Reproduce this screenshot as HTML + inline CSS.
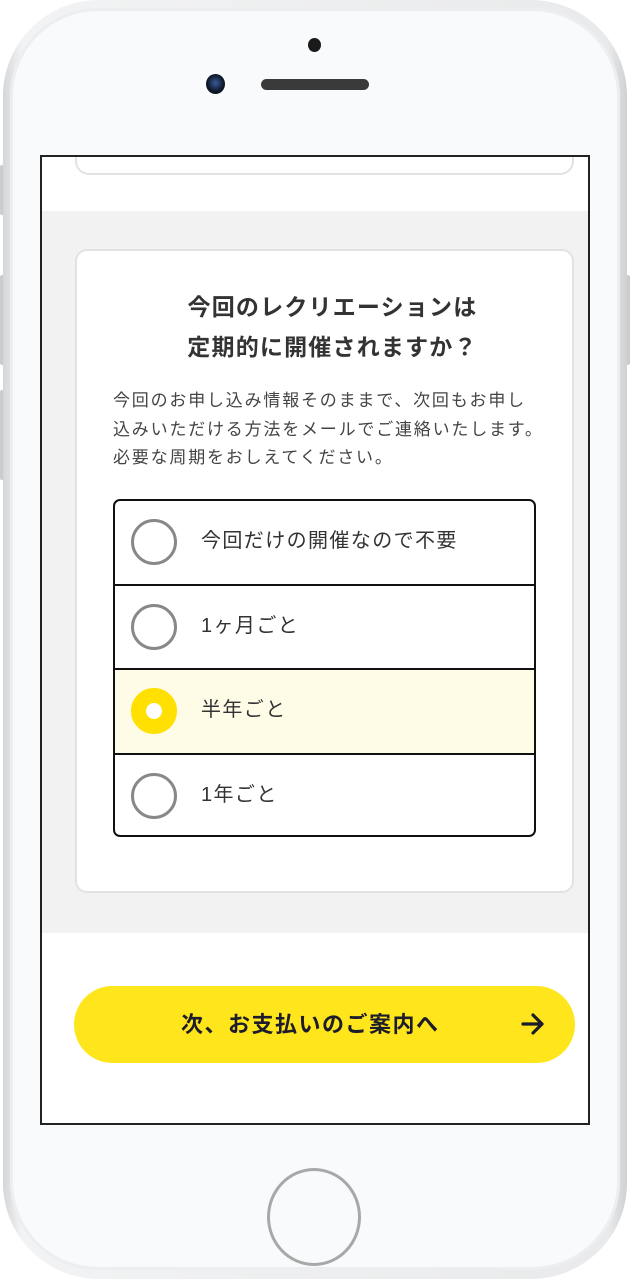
<!DOCTYPE html>
<html><head><meta charset="utf-8"><style>
*{margin:0;padding:0;box-sizing:border-box}
body{width:630px;height:1279px;background:#fff;position:relative;overflow:hidden;font-family:"Liberation Sans","Noto Sans CJK JP",sans-serif;color:#333}
.abs{position:absolute}
.phone{left:3px;top:0;width:624px;height:1279px;border-radius:96px;background:linear-gradient(90deg,#d4d6d8,#f2f3f4 3%,#e9eaeb 97%,#cfd1d3);}
.face{left:10px;top:8px;width:610px;height:1262px;border-radius:88px;background:#f9fafb;border:3px solid #eceef0}
.screen{left:40px;top:155px;width:550px;height:970px;border:2px solid #222;background:#fff;overflow:hidden}
.gray{left:0;top:54px;width:546px;height:722px;background:#f2f2f2}
.card{left:33px;top:92px;width:499px;height:644px;background:#fff;border:2px solid #e2e2e2;border-radius:12px}
.topcard{left:33px;top:-20px;width:499px;height:38px;border:2px solid #e2e2e2;border-top:none;border-radius:0 0 14px 14px}
h1{position:absolute;left:8px;width:100%;top:36px;text-align:center;font-size:23px;letter-spacing:1.2px;line-height:40px;font-weight:bold;color:#333}
.desc{position:absolute;left:36px;top:136px;font-size:17px;letter-spacing:1.8px;line-height:28.5px;color:#444;white-space:nowrap}
.opts{left:36px;top:248px;width:423px;height:338px;border:2px solid #111;border-radius:7px;overflow:hidden}
.row{height:84.5px;border-bottom:2px solid #111;position:relative;font-size:20px;letter-spacing:1.4px;color:#333}
.row:last-child{border-bottom:none}
.row .r{position:absolute;left:16px;top:18px;width:46px;height:46px;border-radius:50%;border:3px solid #888}
.row span{position:absolute;left:86px;top:25px;line-height:30px}
.sel{background:#fefbe6}
.sel .r{border:15px solid #ffe000;background:#fff}
.btn{left:32px;top:829px;width:501px;height:77px;border-radius:39px;background:#ffe51c;font-size:22px;letter-spacing:1.5px;font-weight:bold;color:#1c1c2a;line-height:77px}
</style></head><body>
<div class="abs" style="left:0;top:165px;width:6px;height:50px;background:#ccc;border-radius:2px"></div>
<div class="abs" style="left:0;top:275px;width:6px;height:90px;background:#ccc;border-radius:2px"></div>
<div class="abs" style="left:0;top:390px;width:6px;height:90px;background:#ccc;border-radius:2px"></div>
<div class="abs" style="left:624px;top:275px;width:6px;height:90px;background:#ccc;border-radius:2px"></div>
<div class="abs phone"></div>
<div class="abs face"></div>
<div class="abs" style="left:308px;top:38px;width:13px;height:14px;border-radius:50%;background:#1a1a1a"></div>
<div class="abs" style="left:206px;top:74px;width:19px;height:20px;border-radius:50%;background:radial-gradient(circle at 50% 45%,#3a5a9a,#0c1424 60%)"></div>
<div class="abs" style="left:261px;top:79px;width:108px;height:11px;border-radius:6px;background:#3a3a3a"></div>
<div class="abs" style="left:267px;top:1168px;width:94px;height:98px;border-radius:50%;border:3px solid #a8a8a8;background:#f9fafb"></div>
<div class="abs screen">
 <div class="abs topcard"></div>
 <div class="abs gray"></div>
 <div class="abs card">
  <h1>今回のレクリエーションは<br>定期的に開催されますか？</h1>
  <div class="desc">今回のお申し込み情報そのままで、次回もお申し<br>込みいただける方法をメールでご連絡いたします。<br>必要な周期をおしえてください。</div>
  <div class="abs opts">
   <div class="row"><div class="r"></div><span>今回だけの開催なので不要</span></div>
   <div class="row"><div class="r"></div><span>1ヶ月ごと</span></div>
   <div class="row sel"><div class="r"></div><span>半年ごと</span></div>
   <div class="row"><div class="r"></div><span>1年ごと</span></div>
  </div>
 </div>
 <div class="abs btn"><span class="abs" style="left:107px;top:0">次、お支払いのご案内へ</span>
  <svg class="abs" style="left:447px;top:27px" width="24" height="22" viewBox="0 0 24 22"><path d="M2 11H21M12 2L21 11L12 20" fill="none" stroke="#1c1c2a" stroke-width="3.2" stroke-linecap="round" stroke-linejoin="round"/></svg>
 </div>
</div>
</body></html>
